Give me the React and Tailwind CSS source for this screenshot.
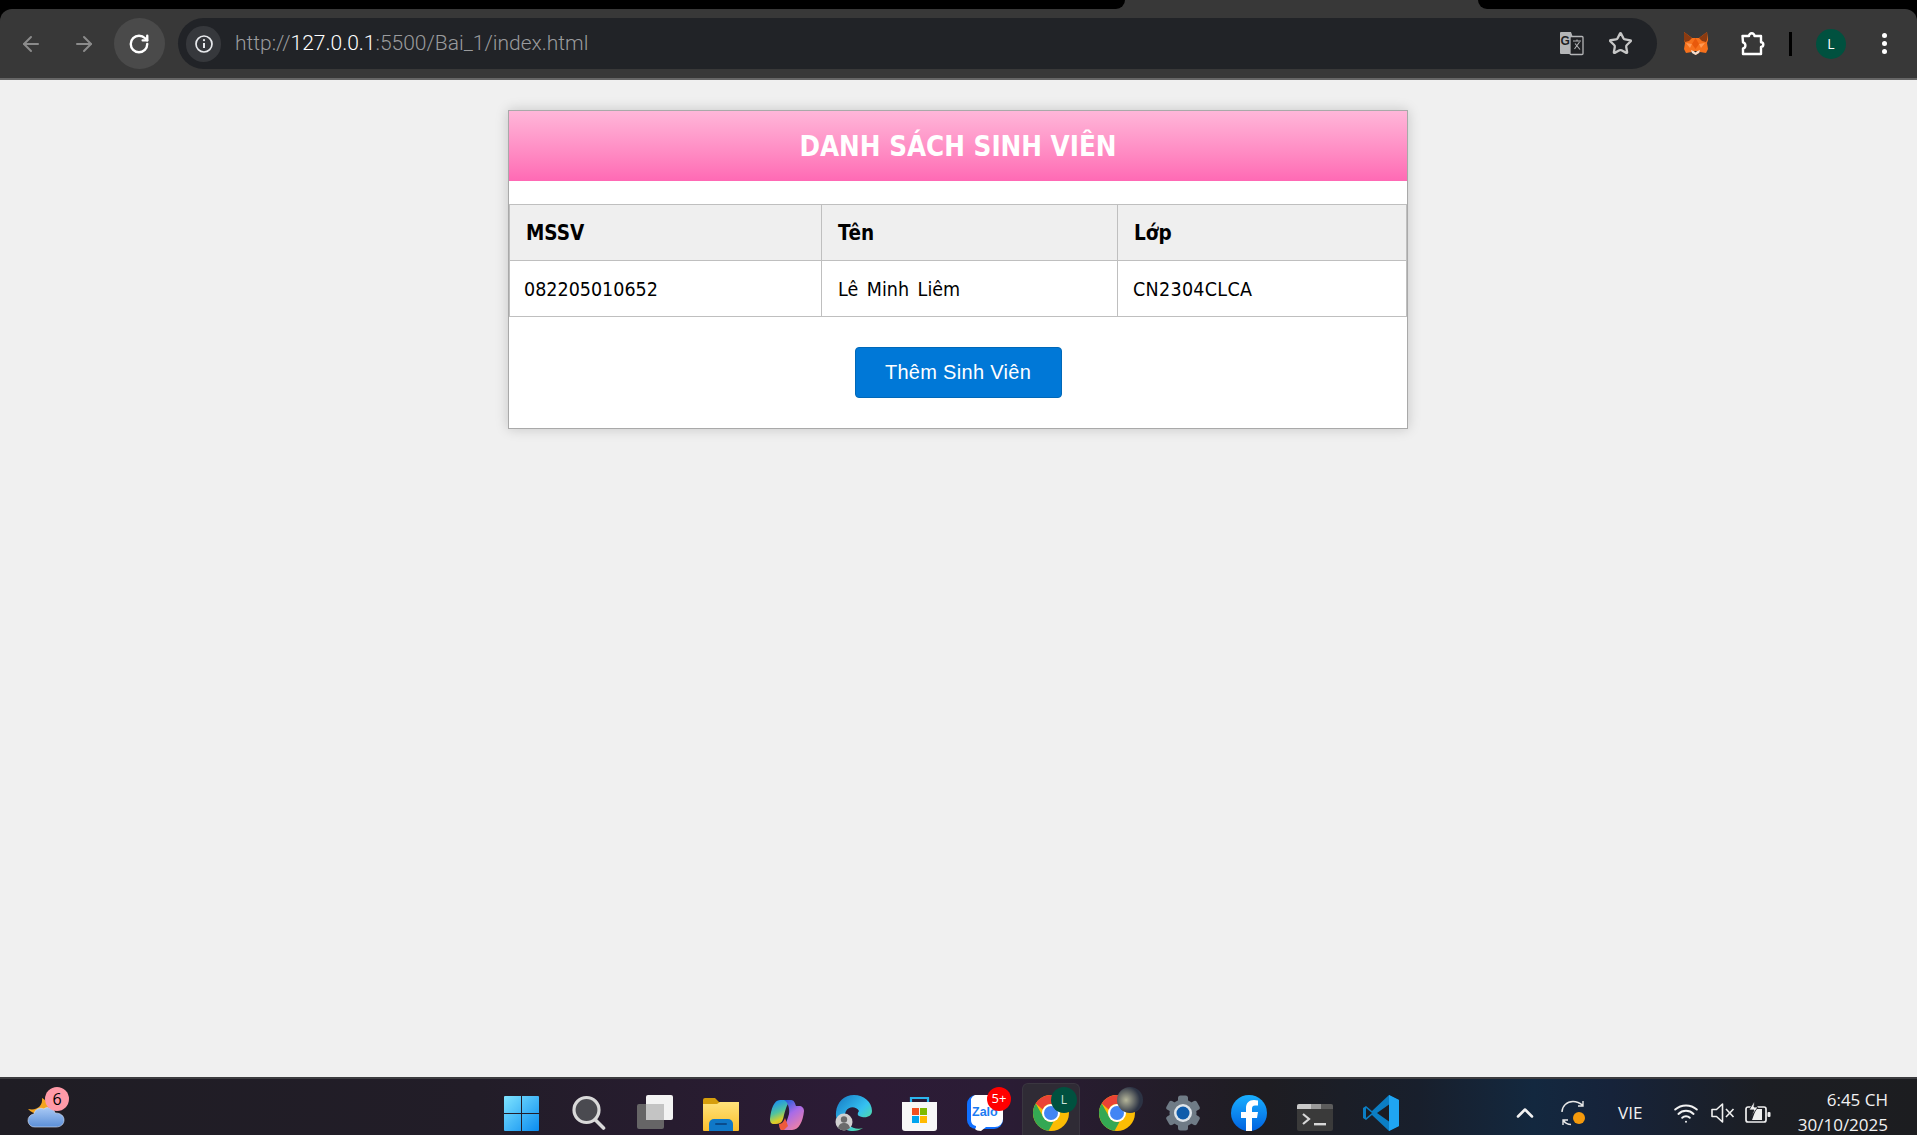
import React from 'react';
import { ArrowLeft, ArrowRight, RotateCw, Star, ChevronUp, Wifi } from 'lucide-react';

const tahoma = { fontFamily: '"DejaVu Sans Condensed", "DejaVu Sans", sans-serif', fontStretch: 'condensed' };

// ---- browser toolbar icons ----
const InfoIcon = () => (
  <svg width="20" height="20" viewBox="0 0 20 20" fill="none" stroke="#e8eaed" strokeWidth="1.7">
    <circle cx="10" cy="10" r="8" />
    <path d="M10 9v5" strokeWidth="2" />
    <circle cx="10" cy="6.2" r="1.1" fill="#e8eaed" stroke="none" />
  </svg>
);

const TranslateIcon = () => (
  <svg width="25" height="25" viewBox="0 0 25 25">
    <path d="M2 1h10l8 22H2a1 1 0 0 1-1-1V2a1 1 0 0 1 1-1z" fill="#b4b5b7" />
    <rect x="11" y="5.5" width="13" height="18" rx="1" fill="#202124" stroke="#b4b5b7" strokeWidth="1.3" />
    <text x="1.500" y="14" fontSize="12" fontWeight="700" fontFamily="Liberation Sans, sans-serif" fill="#202124">G</text>
    <path d="M14 10h8M18 8.5V10M15.5 18l5-7M16 12.5l5 6" stroke="#b4b5b7" strokeWidth="1.1" fill="none" />
  </svg>
);

const FoxIcon = () => (
  <svg width="25" height="23" viewBox="0 0 25 23">
    <path d="M1 0l8 6h7l8-6 1 8-1 3 1 6-2 4-6-1-4 3-4-3-6 1-2-4 1-6-1-3z" fill="#f6711c" />
    <path d="M1 0l8 6-3 3-4 1-1-2zM24 0l-8 6 3 3 4 1 1-2z" fill="#8a3a10" />
    <path d="M3 11l6 1-2 4zM22 11l-6 1 2 4z" fill="#ff9a55" />
    <path d="M9 12l3.500 5 3.500-5-3.500-6z" fill="#e8590c" />
    <path d="M8 18l4.500 2 4.500-2-1 3-3.500 2-3.500-2z" fill="#f2ded0" />
    <path d="M11 19h3l-1.500 1.500z" fill="#2c2c2c" />
  </svg>
);

const PuzzleIcon = () => (
  <svg width="26" height="26" viewBox="0 0 26 26" fill="none" stroke="#fff" strokeWidth="2.4" strokeLinejoin="round">
    <path d="M2.5 5h6.5a2.6 2.6 0 1 1 5.5 0H21v6.3a2.3 2.3 0 1 1 0 4.6V23H3v-5.500a3.2 3.2 0 0 0 0-6.200z" />
  </svg>
);

// ---- taskbar icons ----
const WeatherIcon = () => (
  <svg width="38" height="30" viewBox="0 0 38 30">
    <defs>
      <linearGradient id="cloudFill" x1="0" y1="0" x2="0" y2="1">
        <stop offset="0" stopColor="#a9c9f5" />
        <stop offset="1" stopColor="#5b8fd8" />
      </linearGradient>
    </defs>
    <path d="M15 0c1 8-5 13-14 11 4 5 13 7 19 2 3-3 1-10-5-13z" fill="#f3a41f" />
    <path d="M8 29a6.5 6.5 0 0 1-1-13c1-5 6-7 10-5 3-3 10-1 11 4 6 0 9 3 9 7s-3 7-8 7z" fill="url(#cloudFill)" stroke="#dbe8fb" strokeWidth="0.6" />
  </svg>
);

const WinIcon = () => (
  <svg width="35" height="35" viewBox="0 0 35 35">
    <defs>
      <linearGradient id="winFill" x1="0" y1="0" x2="1" y2="1">
        <stop offset="0" stopColor="#7fe4ff" />
        <stop offset="1" stopColor="#0a8cf0" />
      </linearGradient>
    </defs>
    <path d="M1 0h16v17H0V1a1 1 0 0 1 1-1zM18 0h16a1 1 0 0 1 1 1v16H18zM0 18h17v17H1a1 1 0 0 1-1-1zM18 18h17v16a1 1 0 0 1-1 1H18z" fill="url(#winFill)" />
  </svg>
);

const SearchIcon = () => (
  <svg width="34" height="36" viewBox="0 0 34 36" fill="none">
    <circle cx="14.5" cy="15" r="12.5" fill="#4a4a50" stroke="#d9d9d9" strokeWidth="3.2" />
    <path d="M23.5 25l8 8" stroke="#d9d9d9" strokeWidth="3.6" strokeLinecap="round" />
  </svg>
);

const TaskViewIcon = () => (
  <svg width="36" height="36" viewBox="0 0 36 36">
    <rect x="9" y="0" width="27" height="25" rx="2" fill="#f3f3f3" />
    <rect x="0" y="9" width="27" height="25" rx="2" fill="#6b6b6b" fillOpacity="0.92" />
    <rect x="9" y="9" width="18" height="16" fill="#c4c4c4" />
  </svg>
);

const FolderIcon = () => (
  <svg width="36" height="33" viewBox="0 0 36 33">
    <defs>
      <linearGradient id="folderFill" x1="0" y1="0" x2="0" y2="1">
        <stop offset="0" stopColor="#ffe27a" />
        <stop offset="1" stopColor="#fbc02d" />
      </linearGradient>
    </defs>
    <path d="M0 2a2 2 0 0 1 2-2h10l4 4h20v6H0z" fill="#d69e0c" />
    <path d="M0 6h14l3-2h19v28a1 1 0 0 1-1 1H1a1 1 0 0 1-1-1z" fill="url(#folderFill)" />
    <path d="M6 33v-7a5 5 0 0 1 5-5h14a5 5 0 0 1 5 5v7z" fill="#0f78c8" />
    <rect x="12" y="25" width="12" height="2" rx="1" fill="#0a4c8c" />
  </svg>
);

const CopilotIcon = () => (
  <svg width="34" height="32" viewBox="0 0 34 32">
    <defs>
      <linearGradient id="copA" x1="0.3" y1="0" x2="0.7" y2="1">
        <stop offset="0" stopColor="#1a8ff0" />
        <stop offset="0.45" stopColor="#4fc3a1" />
        <stop offset="0.75" stopColor="#d6cf2c" />
        <stop offset="1" stopColor="#f5a623" />
      </linearGradient>
      <linearGradient id="copB" x1="0.2" y1="0" x2="0.8" y2="1">
        <stop offset="0" stopColor="#1b5fd9" />
        <stop offset="0.45" stopColor="#a86be8" />
        <stop offset="1" stopColor="#f7849e" />
      </linearGradient>
    </defs>
    <path d="M10 1h12c-5 3-6 8-8 15-1 5-2 9-8 9H4c-3 0-4-2-4-5C1 10 4 1 10 1z" fill="url(#copA)" />
    <path d="M14 1h7c3 0 4 3 5 6h3c3 0 5 2 5 5-1 10-5 19-12 19H10c5-3 7-9 9-16 1-5-1-12-5-14z" fill="url(#copB)" />
    <path d="M9 25c3 0 5-3 6-6l3 8-4 4h-2c-2 0-3-3-3-6z" fill="#ef5a3c" />
  </svg>
);

const EdgeIcon = () => (
  <svg width="37" height="36" viewBox="0 0 37 36">
    <defs>
      <linearGradient id="edgeFill" x1="0" y1="0" x2="1" y2="1">
        <stop offset="0" stopColor="#1577c2" />
        <stop offset="0.55" stopColor="#35c1f1" />
        <stop offset="1" stopColor="#66eb6e" />
      </linearGradient>
    </defs>
    <path d="M1 17C2 7 9 0 19 0c10 0 18 7 18 16 0 5-5 7-10 6-5-1-5-3-3-6-3-5-10-5-13 0-2 4-1 10 3 14 3 3 9 5 14 3-3 2-6 3-10 3C8 36 0 28 1 17z" fill="url(#edgeFill)" />
    <circle cx="9" cy="27" r="8.5" fill="#d0d0d0" />
    <circle cx="9" cy="24.5" r="3.2" fill="#6b6b6b" />
    <path d="M3 33c1-4 3-5 6-5s5 1 6 5a8.5 8.5 0 0 1-12 0z" fill="#6b6b6b" />
  </svg>
);

const StoreIcon = () => (
  <svg width="35" height="35" viewBox="0 0 35 35">
    <path d="M9 8V2h17v6" fill="none" stroke="#2bb5ee" strokeWidth="2.2" />
    <path d="M0 6h35v26a3 3 0 0 1-3 3H3a3 3 0 0 1-3-3z" fill="#f7f7f7" />
    <rect x="10" y="12" width="7" height="7" fill="#f25022" />
    <rect x="18" y="12" width="7" height="7" fill="#7fba00" />
    <rect x="10" y="20" width="7" height="7" fill="#00a4ef" />
    <rect x="18" y="20" width="7" height="7" fill="#ffb900" />
  </svg>
);

const ZaloIcon = () => (
  <svg width="36" height="36" viewBox="0 0 36 36">
    <path d="M9 0h18a9 9 0 0 1 9 9v16a9 9 0 0 1-9 9H9a9 9 0 0 1-9-9V9a9 9 0 0 1 9-9z" fill="#0f6fff" />
    <path d="M8 0h20a8 8 0 0 1 8 8v16a8 8 0 0 1-8 8H19l-5 4c-3 0-5-1-6-2 1-1 1-2 1-3a6 6 0 0 1-5-6V4a8 8 0 0 1 4-4z" fill="#fff" />
    <text x="5" y="21" fontSize="12.5" fontWeight="700" fontFamily="Liberation Sans, sans-serif" fill="#1d7cf2">Zalo</text>
  </svg>
);

const ChromeIcon = () => (
  <svg width="36" height="36" viewBox="0 0 36 36">
    <circle cx="18" cy="18" r="18" fill="#fbbc04" />
    <path d="M18 0a18 18 0 0 1 15.6 9H18a9 9 0 0 0-8.3 5.400L2.700 8.500A18 18 0 0 1 18 0z" fill="#ea4335" />
    <path d="M2.700 8.500l7.600 13.600a9 9 0 0 0 10.200 4.600L15.600 35.800A18 18 0 0 1 2.700 8.500z" fill="#34a853" />
    <circle cx="18" cy="18" r="9" fill="#fff" />
    <circle cx="18" cy="18" r="7" fill="#4285f4" />
  </svg>
);

const GearIcon = () => (
  <svg width="36" height="36" viewBox="0 0 36 36">
    <g fill="#6f7b86">
      <circle cx="18" cy="18" r="13.5" />
      {[0, 60, 120, 180, 240, 300].map((deg) => (
        <rect key={deg} x="13" y="0.5" width="10" height="9" rx="2.5" transform={`rotate(${deg} 18 18)`} />
      ))}
    </g>
    <circle cx="18" cy="18" r="9" fill="#dfe5ea" />
    <circle cx="18" cy="18" r="6.5" fill="#0f5cab" />
  </svg>
);

const FacebookIcon = () => (
  <svg width="36" height="36" viewBox="0 0 36 36">
    <defs>
      <linearGradient id="fbFill" x1="0" y1="0" x2="0" y2="1">
        <stop offset="0" stopColor="#19afff" />
        <stop offset="1" stopColor="#0062e0" />
      </linearGradient>
    </defs>
    <circle cx="18" cy="18" r="18" fill="url(#fbFill)" />
    <path d="M15 36V23h-5v-6h5v-4c0-5 3-8 8-8l4 .4v5h-3c-2 0-3 1-3 3V17h6l-1 6h-5v13z" fill="#fff" />
  </svg>
);

const TerminalIcon = () => (
  <svg width="36" height="27" viewBox="0 0 36 27">
    <rect width="36" height="27" rx="2" fill="#3a3a3a" />
    <path d="M0 2a2 2 0 0 1 2-2h12v5H0z" fill="#c9c9c9" />
    <rect x="14" y="0" width="10" height="5" fill="#9a9a9a" />
    <path d="M24 0h10a2 2 0 0 1 2 2v3H24z" fill="#5c5c5c" />
    <path d="M6 10l6 5-6 5" fill="none" stroke="#d8d8d8" strokeWidth="2.2" />
    <rect x="17" y="19" width="12" height="2.4" fill="#d8d8d8" />
  </svg>
);

const VscodeIcon = () => (
  <svg width="36" height="36" viewBox="0 0 36 36">
    <path d="M26 0l10 5v26l-10 5L9 20l-6 5-3-2v-10l3-2 6 5z" fill="#0b7ec4" />
    <path d="M26 0l10 5v26l-10 5z" fill="#1fa5f3" />
    <path d="M26 9.500v17L14 18z" fill="#1b1c22" />
    <path d="M3 13l6 5-6 5z" fill="#1b1c22" />
  </svg>
);

const SyncIcon = () => (
  <svg width="26" height="26" viewBox="0 0 26 26" fill="none" stroke="#e8e8e8" strokeWidth="1.4">
    <path d="M1 12C1 6 6 1.500 12 1.500c4 0 7 1.500 10 4M22 1v5h-5" />
    <path d="M2 25v-5h5M2 20c2 3 5 4.500 8 4.500" />
    <circle cx="18" cy="18" r="6" fill="#f59a0c" stroke="none" />
  </svg>
);

const MuteIcon = () => (
  <svg width="24" height="22" viewBox="0 0 24 22" fill="none" stroke="#f0f0f0" strokeWidth="1.6" strokeLinejoin="round">
    <path d="M1 7.500h4.500L11.500 2v18l-6-5.500H1z" />
    <path d="M15 7l7.500 8M22.500 7L15 15" />
  </svg>
);

const BatteryIcon = () => (
  <svg width="26" height="24" viewBox="0 0 26 24" fill="none" stroke="#f0f0f0" strokeWidth="1.7">
    <path d="M6 6H3a2 2 0 0 0-2 2v11a2 2 0 0 0 2 2h16a2 2 0 0 0 2-2V8a2 2 0 0 0-2-2h-7" />
    <path d="M7 19l4-11h6v11z" fill="#f0f0f0" stroke="none" />
    <path d="M9.500 0L4 9h5l-3 7 7-10H9z" fill="#f0f0f0" stroke="#1b1c22" strokeWidth="0.8" />
    <rect x="22.500" y="11" width="3" height="5" rx="1" fill="#f0f0f0" stroke="none" />
  </svg>
);

const Toolbar = () => (
  <header className="bg-black h-[80px] shrink-0 flex flex-col">
    <div className="h-[9px] flex bg-[#383838]">
      <div className="w-[1125px] bg-black rounded-br-[12px]" />
      <div className="w-[353px]" />
      <div className="flex-1 bg-black rounded-bl-[12px]" />
    </div>
    <div className="h-[69px] bg-[#383838] rounded-t-[12px] flex items-center pl-[6px] pb-[9px] pt-[9px]">
      <div className="w-[50px] flex justify-center text-[#8b8b8b]"><ArrowLeft size={24} strokeWidth={2} /></div>
      <div className="w-[50px] ml-[3px] flex justify-center text-[#8b8b8b]"><ArrowRight size={24} strokeWidth={2} /></div>
      <div className="w-[51px] h-[51px] ml-[5px] rounded-full bg-[#4a4a4a] flex items-center justify-center text-white"><RotateCw size={22} strokeWidth={2.6} className="-ml-[1px]" /></div>
      <div className="w-[1479px] h-[51px] ml-[13px] rounded-full bg-[#212327] flex items-center pl-[8px] pr-[24px]">
        <div className="w-[35px] h-[36px] rounded-full bg-[#36383c] flex items-center justify-center"><InfoIcon /></div>
        <div className="ml-[14px] text-[21px] text-[#9a9b9d] font-['Roboto',sans-serif] font-light">
          http://<span className="text-white">127.0.0.1</span>:5500/Bai_1/index.html
        </div>
        <div className="ml-auto"><TranslateIcon /></div>
        <div className="ml-[24px] text-[#c7c7c7]"><Star size={25} strokeWidth={2.2} /></div>
      </div>
      <div className="ml-[26px]"><FoxIcon /></div>
      <div className="ml-[32px]"><PuzzleIcon /></div>
      <div className="ml-[23px] w-[3px] h-[24px] bg-black" />
      <div className="ml-[24px] w-[30px] h-[30px] rounded-full bg-[#00513f] text-white flex items-center justify-center text-[14px] font-['Open_Sans',sans-serif]">L</div>
      <div className="ml-[36px] flex flex-col gap-[3px]">
        <span className="w-[5px] h-[5px] rounded-full bg-white" />
        <span className="w-[5px] h-[5px] rounded-full bg-white" />
        <span className="w-[5px] h-[5px] rounded-full bg-white" />
      </div>
    </div>
    <div className="h-[2px] bg-[#666666]" />
  </header>
);

const StudentCard = () => (
  <div className="w-[900px] ml-[508px] bg-white border border-[#a9a9a9] shadow-[0_0_12px_rgba(0,0,0,0.18)]" style={tahoma}>
    <h1 className="h-[70px] pt-[2px] bg-gradient-to-b from-[#ffb6d9] to-[#ff69b4] flex items-center justify-center text-white text-[27.5px] font-bold">
      DANH SÁCH SINH VIÊN
    </h1>
    <table className="mt-[23px] w-[898px] table-fixed border-collapse text-black text-[19.5px]">
      <thead>
        <tr className="bg-[#efefef] h-[56px] text-[20.5px]">
          <th className="w-[312px] border border-[#bfbfbf] pl-[16px] pt-[2px] text-left font-bold">MSSV</th>
          <th className="w-[296px] border border-[#bfbfbf] pl-[16px] pt-[2px] text-left font-bold">Tên</th>
          <th className="border border-[#bfbfbf] pl-[16px] pt-[2px] text-left font-bold">Lớp</th>
        </tr>
      </thead>
      <tbody>
        <tr className="h-[56px]">
          <td className="border border-[#bfbfbf] pl-[14px] pt-[2px]">082205010652</td>
          <td className="border border-[#bfbfbf] pl-[16px] pt-[2px] [word-spacing:3px]">Lê Minh Liêm</td>
          <td className="border border-[#bfbfbf] pl-[15px] pt-[2px] tracking-[0.3px]">CN2304CLCA</td>
        </tr>
      </tbody>
    </table>
    <div className="flex justify-center pt-[30px] pb-[30px]">
      <button className="w-[207px] h-[51px] pb-[2px] rounded-[4px] bg-[#0078d7] border border-[#0068b8] text-white text-[20px] tracking-[0.3px] font-['Liberation_Sans',sans-serif]">
        Thêm Sinh Viên
      </button>
    </div>
  </div>
);

const Slot = ({ children, active, badge, wide }) => (
  <div className={`h-[52px] mt-[4px] flex items-end justify-center pb-[4px] relative ${active ? 'w-[58px] rounded-t-[6px] bg-[#2f2b35] border border-b-0 border-[#3a3640] mx-[4px]' : wide ? 'w-[68px] pr-[2px]' : 'w-[66px]'}`}>
    {children}
    {badge}
  </div>
);

const Taskbar = () => (
  <footer className="h-[58px] shrink-0 border-t-2 border-[#3c3c3f] flex bg-[linear-gradient(90deg,#1f1d24_0%,#221d28_25%,#2c1b36_45%,#2b1c35_52%,#1e1d22_66%,#181f2c_74%,#13283f_80%,#16233a_84%,#1c1e23_92%,#1c1d20_100%)]">
    <div className="w-[488px] pl-[27px] pt-[19px] relative">
      <WeatherIcon />
      <span className="absolute left-[45px] top-[8px] w-[24px] h-[24px] rounded-full bg-[#ff9aa8] text-black text-[16px] flex items-center justify-center font-['Open_Sans',sans-serif]">6</span>
    </div>
    <div className="flex w-[926px]">
      <Slot wide><WinIcon /></Slot>
      <Slot><SearchIcon /></Slot>
      <Slot><TaskViewIcon /></Slot>
      <Slot><FolderIcon /></Slot>
      <Slot><CopilotIcon /></Slot>
      <Slot><EdgeIcon /></Slot>
      <Slot><StoreIcon /></Slot>
      <Slot badge={<span className="absolute left-[35px] top-[4px] w-[24px] h-[24px] rounded-full bg-[#f00] text-white text-[13px] flex items-center justify-center font-['Open_Sans',sans-serif]">5+</span>}><ZaloIcon /></Slot>
      <Slot active badge={<span className="absolute left-[28px] top-[3px] w-[26px] h-[26px] rounded-full bg-[#00513f] text-[#cfe3dc] text-[12px] flex items-center justify-center font-['Open_Sans',sans-serif]">L</span>}><ChromeIcon /></Slot>
      <Slot badge={<span className="absolute left-[33px] top-[4px] w-[26px] h-[26px] rounded-full bg-[radial-gradient(circle_at_35%_50%,#b6b69a,#2c3344_65%)]" />}><ChromeIcon /></Slot>
      <Slot><GearIcon /></Slot>
      <Slot><FacebookIcon /></Slot>
      <Slot><TerminalIcon /></Slot>
      <Slot><VscodeIcon /></Slot>
    </div>
    <div className="flex-1 flex items-center text-[#f2f2f2] font-['Open_Sans',sans-serif] pr-[29px] pt-[12px]">
      <ChevronUp size={28} strokeWidth={2.2} className="ml-[97px]" />
      <div className="ml-[22px]"><SyncIcon /></div>
      <span className="ml-[31px] text-[17px]">VIE</span>
      <Wifi size={26} strokeWidth={1.8} className="ml-[31px]" />
      <div className="ml-[12px]"><MuteIcon /></div>
      <div className="ml-[10px]"><BatteryIcon /></div>
      <div className="ml-auto self-start -mt-[4px] text-right text-[17px]">
        <div className="leading-[25px]">6:45 CH</div>
        <div className="mt-[3px] leading-[20px]">30/10/2025</div>
      </div>
    </div>
  </footer>
);

export default function App() {
  return (
    <div className="w-[1917px] h-[1135px] flex flex-col overflow-hidden bg-[#f0f0f0]">
      <Toolbar />
      <main className="flex-1 pt-[30px]">
        <StudentCard />
      </main>
      <Taskbar />
    </div>
  );
}
